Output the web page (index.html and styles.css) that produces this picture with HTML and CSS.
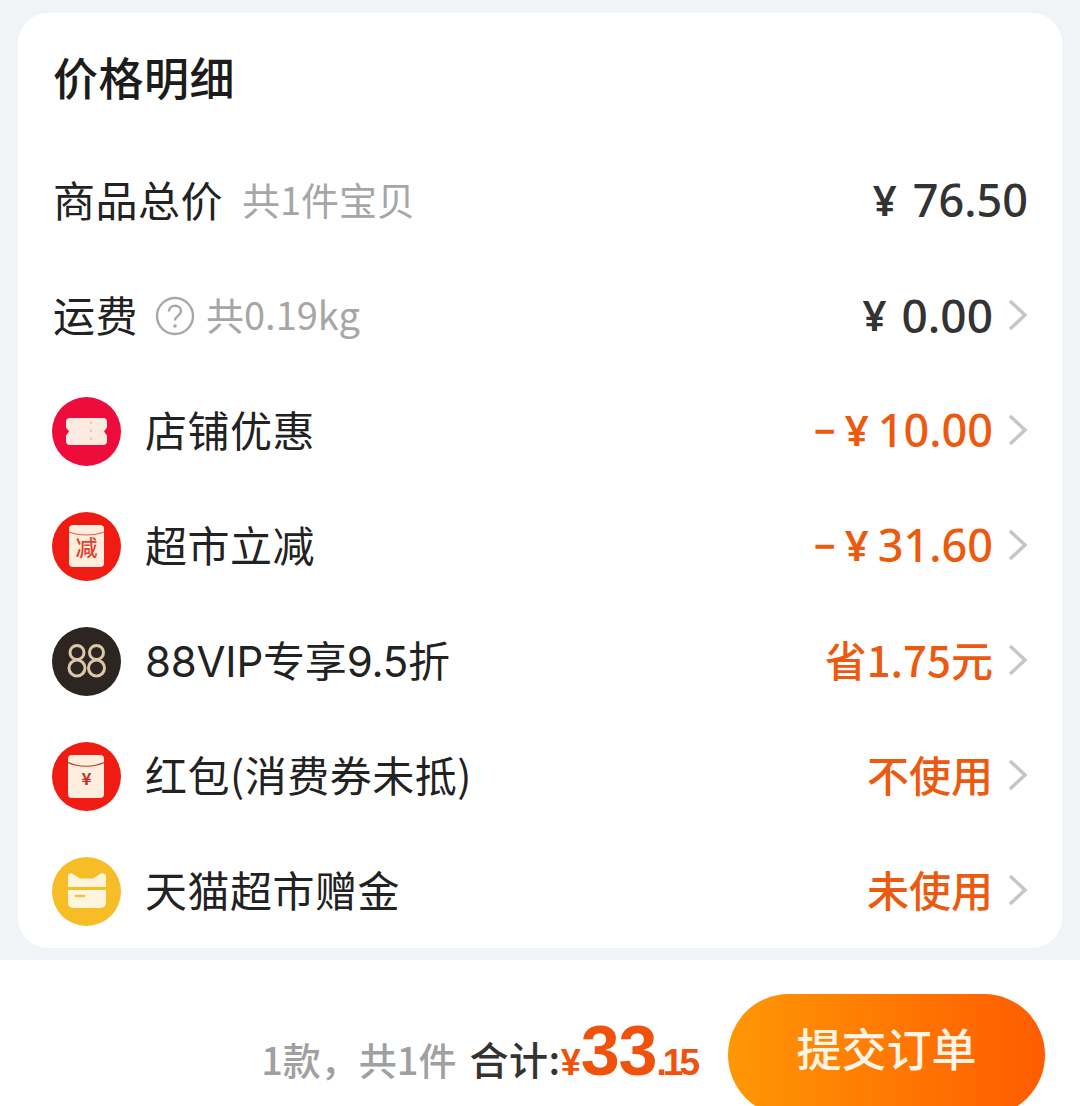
FILE: index.html
```html
<!DOCTYPE html>
<html lang="zh-CN">
<head>
<meta charset="utf-8">
<title>价格明细</title>
<link rel="stylesheet" href="styles.css">
</head>
<body>
<main class="page">
  <section class="card">
    <h1 class="title">价格明细</h1>

    <div class="row">
      <div class="left"><span class="label">商品总价</span><span class="sub sub-goods">共1件宝贝</span></div>
      <div class="right"><span class="money dark goods"><span class="yen">¥</span>76.50</span></div>
    </div>

    <div class="row">
      <div class="left">
        <span class="label">运费</span>
        <svg class="help" viewBox="0 0 40 40"><circle cx="20" cy="20" r="18" fill="none" stroke="#a8a8a8" stroke-width="2.4"/><path d="M14 15.500c0-3.600 2.700-5.700 6-5.700s6 2 6 5.200c0 4.600-6 4.600-6 9.600" fill="none" stroke="#a8a8a8" stroke-width="2.4"/><circle cx="20" cy="30" r="1.800" fill="#a8a8a8"/></svg>
        <span class="sub">共0.19kg</span>
      </div>
      <div class="right"><span class="money dark"><span class="yen">¥</span>0.00</span><svg class="chev" viewBox="0 0 20 32"><path d="M2 2l15 14L2 30" /></svg></div>
    </div>

    <div class="row">
      <div class="left">
        <svg class="icon" viewBox="0 0 69 69"><circle cx="34.500" cy="34.500" r="34.500" fill="#ee0c3c"/><path d="M18 21h33a4 4 0 0 1 4 4v5.500l-3 4 3 4V44a4 4 0 0 1-4 4H18a4 4 0 0 1-4-4v-5.500l3-4-3-4V25a4 4 0 0 1 4-4z" fill="#fdebe2"/><path d="M39 24v22" stroke="#f3c9bd" stroke-width="2" stroke-dasharray="3 5"/></svg>
        <span class="label">店铺优惠</span>
      </div>
      <div class="right"><span class="money orange"><span class="minus">−</span><span class="yen tight">¥</span>10.00</span><svg class="chev" viewBox="0 0 20 32"><path d="M2 2l15 14L2 30" /></svg></div>
    </div>

    <div class="row">
      <div class="left">
        <svg class="icon" viewBox="0 0 69 69"><circle cx="34.500" cy="34.500" r="34.500" fill="#f01c14"/><rect x="17" y="13" width="35" height="42" rx="4" fill="#fdeedd"/><path d="M17 20c10 4 25 4 35 0" fill="none" stroke="#e8604c" stroke-width="1.200"/><text x="34.500" y="44" text-anchor="middle" class="icon-text">减</text></svg>
        <span class="label">超市立减</span>
      </div>
      <div class="right"><span class="money orange"><span class="minus">−</span><span class="yen tight">¥</span>31.60</span><svg class="chev" viewBox="0 0 20 32"><path d="M2 2l15 14L2 30" /></svg></div>
    </div>

    <div class="row">
      <div class="left">
        <svg class="icon" viewBox="0 0 69 69"><circle cx="34.500" cy="34.500" r="34.500" fill="#2c2522"/><g fill="none" stroke="#dcc8a6" stroke-width="3"><circle cx="25" cy="25.500" r="7"/><circle cx="25" cy="41" r="8"/><circle cx="44.500" cy="25.500" r="7"/><circle cx="44.500" cy="41" r="8"/></g></svg>
        <span class="label latin">88VIP专享9.5折</span>
      </div>
      <div class="right"><span class="value orange">省1.75元</span><svg class="chev" viewBox="0 0 20 32"><path d="M2 2l15 14L2 30" /></svg></div>
    </div>

    <div class="row">
      <div class="left">
        <svg class="icon" viewBox="0 0 69 69"><circle cx="34.500" cy="34.500" r="34.500" fill="#f01c14"/><rect x="16" y="13" width="36" height="43" rx="4" fill="#fdeedd"/><path d="M16 20.500c10 5 26 5 36 0" fill="none" stroke="#c8302a" stroke-width="1.200"/><text x="34.500" y="43" text-anchor="middle" class="icon-yen">¥</text></svg>
        <span class="label">红包(消费券未抵)</span>
      </div>
      <div class="right"><span class="value orange">不使用</span><svg class="chev" viewBox="0 0 20 32"><path d="M2 2l15 14L2 30" /></svg></div>
    </div>

    <div class="row">
      <div class="left">
        <svg class="icon" viewBox="0 0 69 69"><circle cx="34.500" cy="34.500" r="34.500" fill="#f7bd26"/><path d="M16 30V19c0-2 2-3.500 4-2.500l8 5h13l8-5c2-1 5 .5 5 2.500v11z" fill="#fff5dc"/><path d="M16 33h38v13a5 5 0 0 1-5 5H21a5 5 0 0 1-5-5z" fill="#fff5dc"/><path d="M23 39h10" stroke="#f0c04a" stroke-width="2.400"/></svg>
        <span class="label">天猫超市赠金</span>
      </div>
      <div class="right"><span class="value orange">未使用</span><svg class="chev" viewBox="0 0 20 32"><path d="M2 2l15 14L2 30" /></svg></div>
    </div>
  </section>

  <footer class="footer">
    <div class="summary">
      <span class="count">1款，共1件</span>
      <span class="total-label">合计:</span><span class="total"><span class="t-yen">¥</span><span class="t-int">33</span><span class="t-dec">.15</span></span>
    </div>
    <button class="submit" type="button">提交订单</button>
  </footer>
</main>
</body>
</html>
```

FILE: styles.css
```css
* { box-sizing: border-box; }
html, body { margin: 0; padding: 0; height: 100%; overflow: hidden; }
body {
  background: #f1f4f7;
  font-family: "Noto Sans CJK SC", "Noto Sans", sans-serif;
  color: #222;
}
.page { width: 1080px; height: 1106px; display: flex; flex-direction: column; overflow: hidden; padding-top: 13px; }
.card {
  margin: 0 18px;
  height: 935px;
  background: #fff;
  border-radius: 30px;
  padding: 0 34px;
  flex: none;
}
.title {
  margin: 0;
  height: 130.500px;
  padding: 0 0 3px 1px;
  display: flex;
  align-items: center;
  font-size: 45px;
  font-weight: 500;
  letter-spacing: 0.5px;
  color: #1c1c1c;
}
.row { height: 115px; display: flex; align-items: center; justify-content: space-between; }
.left { display: flex; align-items: center; }
.label { font-size: 42px; font-weight: 400; color: #222; padding: 0 0 6px 1px; letter-spacing: 0.5px; white-space: nowrap; }
.latin { font-family: "Inter", "Noto Sans CJK SC", sans-serif; letter-spacing: -0.2px; }
.sub { font-size: 38px; color: #a6a6a6; white-space: nowrap; padding-bottom: 6px; }
.sub-goods { margin-left: 19px; }
.help { width: 40px; height: 40px; margin: 0 11px 0 17px; flex: none; }
.icon { width: 69px; height: 69px; flex: none; margin-right: 23px; }
.icon-text { font-size: 22px; font-weight: 500; fill: #e04030; font-family: "Noto Sans CJK SC", sans-serif; }
.icon-yen { font-size: 17px; font-weight: 700; fill: #c8302a; font-family: "Noto Sans CJK SC", sans-serif; }
.right { display: flex; align-items: center; }
.money { font-family: "Noto Sans", sans-serif; font-size: 46px; font-weight: 500; white-space: nowrap; display: flex; align-items: center; padding-bottom: 3px; }
.money.orange, .money.goods { font-size: 45px; }
.value { font-size: 42px; font-weight: 500; white-space: nowrap; padding-bottom: 6px; }
.dark { color: #333; }
.orange { color: #ec5a10; }
.yen { margin-right: 15px; font-size: 42px; font-weight: 600; }
.goods .yen { margin-right: 16px; }
.yen.tight { margin-right: 9px; }
.minus { margin-right: 9px; font-size: 38px; font-weight: 700; }
.chev { width: 20px; height: 32px; margin-left: 15px; flex: none; position: relative; top: -1px; }
.chev path { fill: none; stroke: #c6c6c6; stroke-width: 3.5; }
.footer {
  margin-top: 12px;
  flex: 1;
  background: #fff;
  display: flex;
  justify-content: flex-end;
  padding: 34px 35px 0 0;
}
.summary { display: flex; align-items: baseline; height: 96px; margin-right: 32px; font-weight: 500; white-space: nowrap; }
.count { font-size: 38px; color: #a0a0a0; margin-right: 13px; line-height: 130px; }
.total-label { font-size: 39px; letter-spacing: 0.5px; color: #333; }
.total { color: #f0520c; font-family: "Liberation Sans", sans-serif; font-weight: 700; }
.t-yen { font-size: 36px; }
.t-int { font-size: 70px; letter-spacing: -1px; }
.t-dec { font-size: 37px; letter-spacing: -4px; }
.submit {
  flex: none;
  width: 317px;
  height: 122px;
  border: 0;
  border-radius: 61px;
  background: linear-gradient(90deg, #ff9705, #ff5c00);
  color: #fff4e6;
  font-family: "Noto Sans CJK SC", sans-serif;
  font-size: 45px;
  font-weight: 500;
  padding: 0 0 16px 0;
}
```
